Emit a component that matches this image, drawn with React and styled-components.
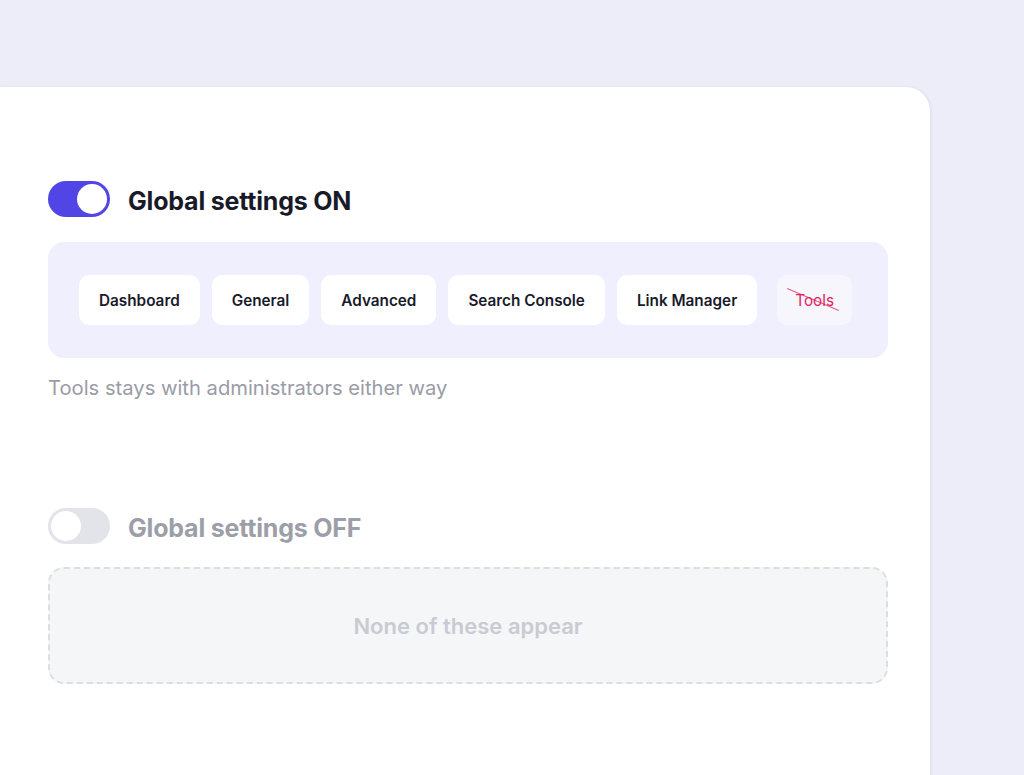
import styled, { createGlobalStyle } from "styled-components";

const Global = createGlobalStyle`
  html, body {
    margin: 0;
    padding: 0;
    background: #ededf9;
    font-family: Inter, "Noto Sans", sans-serif;
    overflow: hidden;
  }
`;

const Page = styled.div`
  height: 775px;
  padding-top: 87px;
  box-sizing: border-box;
`;

const Card = styled.div`
  width: 930px;
  height: 720px;
  background: #ffffff;
  border-radius: 0 24px 0 0;
  box-shadow: 1px 0 3px rgba(120, 120, 150, 0.12);
  padding: 94px 42px 0 48px;
  box-sizing: border-box;
`;

const Section = styled.div`
  display: flex;
  flex-direction: column;
  margin-bottom: ${(p) => p.$gap || 0}px;
`;

const Header = styled.div`
  display: flex;
  align-items: center;
  gap: 18px;
  height: 36px;
`;

const Toggle = styled.div`
  width: 62px;
  height: 36px;
  border-radius: 18px;
  background: ${(p) => (p.$on ? "#5146e5" : "#e3e4e9")};
  position: relative;
  flex-shrink: 0;

  &::after {
    content: "";
    position: absolute;
    top: 3px;
    left: ${(p) => (p.$on ? "29px" : "3px")};
    width: 30px;
    height: 30px;
    border-radius: 50%;
    background: #ffffff;
  }
`;

const Title = styled.h2`
  margin: 4px 0 0;
  font-size: 25px;
  font-weight: 700;
  letter-spacing: -0.2px;
  color: ${(p) => (p.$muted ? "#9c9ea8" : "#181a2a")};
`;

const Panel = styled.div`
  margin-top: 25px;
  height: 116px;
  border-radius: 16px;
  background: #efeffd;
  display: flex;
  align-items: center;
  gap: 12px;
  padding: 0 31px;
  box-sizing: border-box;
`;

const Chip = styled.div`
  position: relative;
  height: 50px;
  padding: 0 20px;
  border-radius: 10px;
  background: ${(p) => (p.$blocked ? "#f6f6fc" : "#ffffff")};
  color: ${(p) => (p.$blocked ? "#e0245e" : "#181a2a")};
  font-size: 15.3px;
  font-weight: ${(p) => (p.$blocked ? 400 : 600)};
  display: flex;
  align-items: center;
  ${(p) => (p.$blocked ? "margin-left: 8px; padding: 0 18px;" : "")}

  ${(p) =>
    p.$blocked &&
    `
    &::after {
      content: "";
      position: absolute;
      left: 8px;
      top: 24px;
      width: 56px;
      height: 1px;
      background: #e0245e;
      opacity: 0.75;
      transform: rotate(23deg);
    }
  `}
`;

const Caption = styled.p`
  margin: 17px 0 0;
  font-size: 20.2px;
  color: #9a9ca6;
`;

const Empty = styled.div`
  margin-top: 23px;
  height: 117px;
  border-radius: 16px;
  border: 2px dashed #dcdee3;
  background: #f5f6f8;
  box-sizing: border-box;
  display: flex;
  align-items: center;
  justify-content: center;
  font-size: 22px;
  font-weight: 600;
  color: #c9cbd2;
`;

const tabs = ["Dashboard", "General", "Advanced", "Search Console", "Link Manager"];

export default function App() {
  return (
    <Page>
      <Global />
      <Card>
        <Section $gap={108}>
          <Header>
            <Toggle $on />
            <Title>Global settings ON</Title>
          </Header>
          <Panel>
            {tabs.map((t) => (
              <Chip key={t}>{t}</Chip>
            ))}
            <Chip $blocked>Tools</Chip>
          </Panel>
          <Caption>Tools stays with administrators either way</Caption>
        </Section>
        <Section>
          <Header>
            <Toggle />
            <Title $muted>Global settings OFF</Title>
          </Header>
          <Empty>None of these appear</Empty>
        </Section>
      </Card>
    </Page>
  );
}
